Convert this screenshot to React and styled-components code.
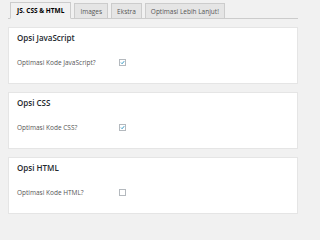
import styled, { createGlobalStyle } from "styled-components";

const GlobalStyle = createGlobalStyle`
  html, body {
    margin: 0;
    padding: 0;
    background: #f1f1f1;
    font-family: "Open Sans", "Noto Sans", sans-serif;
  }
`;

const Page = styled.div`
  width: 300px;
  height: 216px;
  box-sizing: border-box;
  padding: 2px 2px 0 8px;
  overflow: hidden;
`;

const TabBar = styled.div`
  display: flex;
  align-items: flex-end;
  gap: 3px;
  padding-left: 2px;
  height: 16px;
  border-bottom: 1px solid #cccccc;
`;

const Tab = styled.div`
  box-sizing: border-box;
  height: ${(p) => (p.$active ? "17px" : "15px")};
  margin-bottom: ${(p) => (p.$active ? "-1px" : "0")};
  padding: 0 ${(p) => (p.$active ? "6px" : "5px")};
  display: flex;
  align-items: center;
  border: 1px solid #cccccc;
  border-bottom: ${(p) => (p.$active ? "1px solid #f1f1f1" : "none")};
  background: ${(p) => (p.$active ? "#f1f1f1" : "#e5e5e5")};
  color: ${(p) => (p.$active ? "#000000" : "#555555")};
  font-size: 6.5px;
  font-weight: ${(p) => (p.$active ? 700 : 400)};
  white-space: nowrap;
`;

const Cards = styled.div`
  display: flex;
  flex-direction: column;
  gap: 8px;
  margin-top: 8px;
`;

const Card = styled.section`
  box-sizing: border-box;
  height: 57px;
  padding: 4px 8px 0;
  background: #ffffff;
  border: 1px solid #e5e5e5;
`;

const Title = styled.h2`
  margin: 0;
  font-size: 8px;
  line-height: 12px;
  font-weight: 600;
  color: #23282d;
`;

const Row = styled.div`
  display: flex;
  align-items: center;
  height: 12px;
  margin-top: 12px;
`;

const Label = styled.span`
  width: 102px;
  font-size: 6.5px;
  color: #555555;
`;

const Box = styled.span`
  box-sizing: border-box;
  width: 7px;
  height: 7px;
  border: 1px solid #b4b9be;
  background: #ffffff;
  display: flex;
  align-items: center;
  justify-content: center;
`;

function Checkbox({ checked }) {
  return (
    <Box>
      {checked && (
        <svg width="7" height="7" viewBox="0 0 10 10">
          <path d="M2 5.2 L4.2 7.4 L8.4 2.4" fill="none" stroke="#1e8cbe" strokeWidth="1.8" />
        </svg>
      )}
    </Box>
  );
}

const sections = [
  { title: "Opsi JavaScript", label: "Optimasi Kode JavaScript?", checked: true },
  { title: "Opsi CSS", label: "Optimasi Kode CSS?", checked: true },
  { title: "Opsi HTML", label: "Optimasi Kode HTML?", checked: false },
];

export default function App() {
  return (
    <>
      <GlobalStyle />
      <Page>
        <TabBar>
          <Tab $active>JS. CSS &amp; HTML</Tab>
          <Tab>Images</Tab>
          <Tab>Ekstra</Tab>
          <Tab>Optimasi Lebih Lanjut!</Tab>
        </TabBar>
        <Cards>
          {sections.map((s) => (
            <Card key={s.title}>
              <Title>{s.title}</Title>
              <Row>
                <Label>{s.label}</Label>
                <Checkbox checked={s.checked} />
              </Row>
            </Card>
          ))}
        </Cards>
      </Page>
    </>
  );
}
